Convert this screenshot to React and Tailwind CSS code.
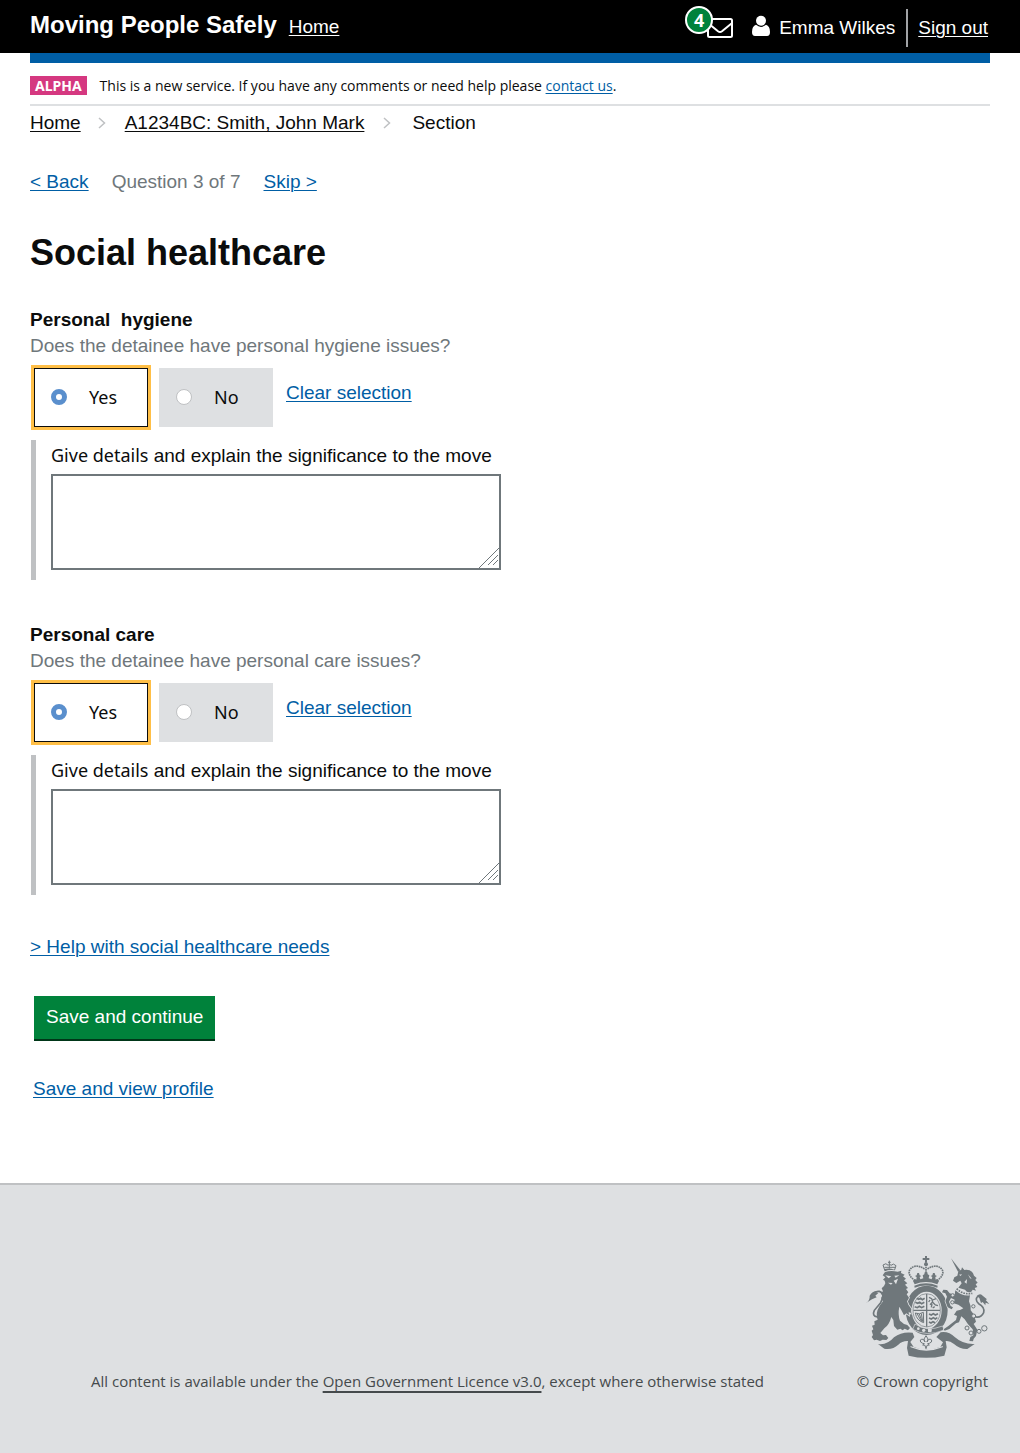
import React from "react";

const link = "text-[#005ea5] underline decoration-1 underline-offset-2";

function Chevron() {
  return (
    <svg width="8" height="12" viewBox="0 0 8 12" fill="none" stroke="#bfc1c3" strokeWidth="1.5" aria-hidden="true">
      <path d="M1 1l5.5 5L1 11" />
    </svg>
  );
}

function MessagesIcon() {
  return (
    <a href="#messages" aria-label="4 messages" className="relative block h-7 w-12 shrink-0">
      <svg className="absolute right-0 bottom-1" width="26" height="20" viewBox="0 0 26 20" fill="none" stroke="#fff" strokeWidth="2" strokeLinejoin="round" aria-hidden="true">
        <rect x="1" y="1" width="24" height="18" rx="1.5" />
        <path d="M1.5 5.5L11 13.2q2 1.4 4 0L24.5 5.5" />
      </svg>
      <span className="absolute -top-2 left-0 flex h-7 w-7 items-center justify-center rounded-full border-2 border-white bg-[#00823b] font-['Noto_Sans',sans-serif] text-[18px] leading-6 font-bold">4</span>
    </a>
  );
}

function Header() {
  return (
    <header className="bg-black text-white">
      <div className="flex min-h-[53px] items-center pr-8 pl-[30px]">
        <span className="pb-1 text-2xl font-bold">Moving People Safely</span>
        <a href="#home" className="ml-3 underline decoration-1 underline-offset-2">Home</a>
        <div className="ml-auto flex items-center pt-0.5">
          <MessagesIcon />
          <svg className="mr-2 mb-1 ml-[18px]" width="20" height="22" viewBox="0 0 20 22" fill="#fff" aria-hidden="true">
            <circle cx="10" cy="5.7" r="5" />
            <path d="M5 9.8Q10 14 15 9.8Q19 11 19 17Q19 21 16 21H4Q1 21 1 17Q1 11 5 9.8Z" />
          </svg>
          <span>Emma Wilkes</span>
          <span className="ml-[11px] h-[38px] w-0.5 bg-[#a1a3a6]" />
          <a href="#sign-out" className="ml-[10px] underline decoration-1 underline-offset-2">Sign out</a>
        </div>
      </div>
    </header>
  );
}

function RadioBlock({ name, label, selected }) {
  return (
    <label className={selected
      ? "flex h-[59px] w-[114px] items-center border border-[#0b0c0c] bg-white pb-px pl-4 outline-3 outline-[#ffbf47]"
      : "flex h-[59px] w-[114px] items-center border border-[#dee0e2] bg-[#dee0e2] pb-px pl-4"}>
      <input type="radio" name={name} defaultChecked={selected}
        className="h-4 w-4 appearance-none rounded-full border border-[#bfc1c3] bg-white checked:border-5 checked:border-[#5a8fcd]" />
      <span className="ml-[22px] font-['Noto_Sans',sans-serif] text-[18px]">{label}</span>
    </label>
  );
}

function Question({ id, title, hint }) {
  return (
    <fieldset>
      <legend className="leading-[26px]">
        <span className="block font-bold whitespace-pre">{title}</span>
        <span className="block text-[#6f777b]">{hint}</span>
      </legend>
      <div className="mt-[9px] ml-1 flex">
        <RadioBlock name={id} label="Yes" selected />
        <div className="ml-[11px]"><RadioBlock name={id} label="No" /></div>
        <a href="#clear" className={`${link} mt-[13px] ml-[13px] self-start`}>Clear selection</a>
      </div>
      <div className="mt-[13px] ml-px border-l-5 border-[#bfc1c3] pb-[10px] pl-[15px]">
        <label htmlFor={`${id}-details`} className="block pt-[3px] pb-[6px]">
          <span className="font-['Noto_Sans',sans-serif] text-[18px]">Give details</span> and explain the significance to the move
        </label>
        <div className="relative max-w-[450px]">
          <textarea id={`${id}-details`} className="block h-24 w-full resize-none border-2 border-[#6f777b] bg-white p-1" />
          <svg className="pointer-events-none absolute right-0.5 bottom-0.5" width="20" height="20" viewBox="0 0 20 20" stroke="#6f777b" aria-hidden="true">
            <path d="M0 20L20 0M9 17L19 7M14 17L19 12" />
          </svg>
        </div>
      </div>
    </fieldset>
  );
}

function Crest() {
  return (
    <svg className="-mr-0.5" width="125" height="104" viewBox="45 45 375 312" fill="#6f777b" aria-hidden="true">
      {/* crown */}
      <path d="M225 48h6v6h7v6h-7v8h-6v-8h-7v-6h7z" />
      <circle cx="228" cy="73" r="6" />
      <g fill="none" stroke="#6f777b" strokeWidth="5" strokeDasharray="5 2">
        <path d="M195 122Q172 105 179 90Q194 68 226 88" />
        <path d="M261 122Q284 105 277 90Q262 68 230 88" />
        <path d="M228 80V122" />
      </g>
      <path d="M189 123l6-6 4 2 1-8-5-3 5-2 2-7 5 0 2 7 5 2-5 3 2 7 9-3-2-9 5-3 1-6h8l1 6 5 3-2 9 9 3 2-7-5-3 5-2 2-7h5l2 7 5 2-5 3 1 8 4-2 6 6-5 10Q228 119 194 133z" />
      <path d="M193 137Q228 123 263 137l-1 6Q228 130 194 143z" />
      {/* garter and shield */}
      <ellipse cx="230" cy="211" rx="54" ry="65" fill="none" stroke="#6f777b" strokeWidth="18" />
      <ellipse cx="230" cy="211" rx="41" ry="50" fill="#dee0e2" stroke="#6f777b" strokeWidth="2" />
      <path d="M228 162h4v98h-4zM190 209h80v4h-80z" />
      <path fill="none" stroke="#6f777b" strokeWidth="5" d="M200 175l6 3 6-3 5 4 7-4M196 187l7 3 6-3 6 4 8-4M194 200l8 3 6-4 7 4 8-4M237 222l7 3 6-4 6 4 8-4M237 234l7 3 6-4 6 4 6-4M237 246l6 3 6-4 6 3" />
      <path fill="none" stroke="#6f777b" strokeWidth="4" d="M237 172l8 4 3 10-8 8M248 180l10-4M248 187l8 8 8 2M246 192l-2 10M254 200l-6 4M240 180l-4 6" />
      <path fill="none" stroke="#6f777b" strokeWidth="3" d="M196 219Q208 225 220 217L221 248Q200 242 196 219M202 222l12 22M208 222l8 22M214 221l4 24" />
      <path d="M195 252Q230 277 278 258L282 270Q230 292 188 268z" stroke="#dee0e2" strokeWidth="2" />
      <g fill="#dee0e2"><circle cx="205" cy="266" r="4" /><circle cx="221" cy="271" r="5" /><path d="M234 266l12 2-2 9-10-1z" /></g>
      {/* lion */}
      <path fill="none" stroke="#6f777b" strokeWidth="3" d="M104 90L99 75Q108 67 115 76Q118 68 123 76Q130 68 138 77L133 92M118 62v24M114 67h8M103 82h32" />
      <path d="M103 87Q118 83 135 90L134 96Q118 90 103 94z" />
      <path stroke="#dee0e2" strokeWidth="5" paintOrder="stroke" d="M105 96Q122 90 143 95L154 92 153 99 164 104 159 109 168 116 162 121 172 130 165 134 174 144 168 147 175 157 170 163 177 173 174 179 171 184 175 194 184 207 182 220 176 215 177 226 169 220 162 226 155 212 148 200Q143 224 150 242L162 252 172 255 180 264 174 271 164 266 158 271 151 266 142 269 132 258 130 240 124 231Q117 256 103 265L91 279 99 286 108 285 115 294 109 300 98 299 90 303 80 299 72 301 65 291 69 285 65 272 70 268 66 257 74 254 73 244 83 239Q75 220 89 197L99 184 93 174 98 168 92 159 99 154 95 145 102 138 106 130 104 122 99 119 106 112 98 106z" />
      <path fill="#dee0e2" d="M106 106l18 3-8 6zM133 107l15-1-11 7zM131 122l13-6-6 17zM114 128l14 1-5 5z" />
      <path fill="none" stroke="#6f777b" strokeWidth="5" d="M82 231Q65 228 73 211L92 188Q107 160 88 154Q76 153 70 164" />
      <path d="M48 189Q60 182 59 167Q67 151 85 153L77 158 85 159 76 167 80 172 66 178z" />
      {/* unicorn */}
      <path d="M303 55L331 91 324 95z" />
      <path d="M325 94L334 89 336 82 343 90Q367 87 372 107L380 114 376 120 383 128 377 133 382 141 374 144 378 152 368 149 364 155Q352 160 345 149L325 143 335 130 331 122 319 129 309 122 313 112 322 107z" />
      <path fill="#dee0e2" d="M327 104l9-1-4 5zM343 126l8-9-1 14zM354 103l11 13-5-1z" />
      <path fill="none" stroke="#6f777b" strokeWidth="5" strokeDasharray="5 3" d="M320 146Q340 166 367 160" />
      <path stroke="#dee0e2" strokeWidth="4" paintOrder="stroke" d="M316 151Q338 170 360 166L357 184Q364 199 362 211L371 223 378 245 371 252 382 269 378 288 371 296 369 304 358 303 361 291 370 286 368 268 354 253 344 238 334 229 327 247 318 250 298 267 284 272 281 268 295 258 318 240 321 228 312 224 320 212Q334 211 340 205L325 194 311 190 314 179 303 174 297 185 302 198 309 202 305 208 293 202 286 183 291 170 286 160 276 157 280 149 291 150 299 160 314 164z" />
      <path fill="none" stroke="#6f777b" strokeWidth="5" d="M370 229Q392 237 401 218Q406 202 386 191Q373 179 384 168" />
      <path d="M380 168Q391 158 399 168L411 178 407 180 418 192 407 188 406 196 398 186 393 189 388 174z" />
      <g fill="#dee0e2" stroke="#6f777b" strokeWidth="3">
        <circle cx="308" cy="166" r="5" /><circle cx="307" cy="187" r="5" /><circle cx="370" cy="199" r="5" /><circle cx="371" cy="228" r="6" />
        <circle cx="351" cy="264" r="6" /><circle cx="363" cy="279" r="6" /><circle cx="387" cy="274" r="6" /><circle cx="403" cy="265" r="8" />
      </g>
      {/* scroll */}
      <path d="M84 312Q112 316 132 292Q155 274 188 278L193 291 181 306 191 321Q228 336 271 321L279 307 259 291 272 277Q296 273 315 292Q340 314 374 312L352 327Q330 328 312 312Q299 301 287 303L290 322 283 347Q228 360 176 347L171 324 174 303Q157 302 145 314Q128 330 103 326z" />
      <path fill="#dee0e2" d="M181 318Q228 338 279 318L278 322Q228 342 182 322z" />
      <path fill="none" stroke="#6f777b" strokeWidth="3" d="M228 287l6 10-3 9q5-13 14-6q2 7-7 10l-5 1 5 4-7 1-3 10-3-10-7-1 5-4-5-1q-9-3-7-10q9-7 14 6l-3-9z" />
    </svg>
  );
}

function Footer() {
  return (
    <footer className="mt-[82px] border-t-2 border-[#bfc1c3] bg-[#dee0e2] pt-[70px] pb-[60px] font-['Open_Sans',sans-serif] text-[15px] text-[#454a4c]">
      <div className="flex items-end pr-8 pl-[91px]">
        <p>All content is available under the <a href="#licence" className="underline decoration-2 underline-offset-4">Open Government Licence v3.0</a>, except where otherwise stated</p>
        <div className="ml-auto flex flex-col items-end">
          <Crest />
          <a href="#copyright" className="mt-[10px]">© Crown copyright</a>
        </div>
      </div>
    </footer>
  );
}

export default function App() {
  return (
    <div className="bg-white font-['Liberation_Sans',Arial,sans-serif] text-[19px] leading-6 text-[#0b0c0c]">
      <Header />
      <div className="mx-[30px]">
        <div className="h-[10px] bg-[#005ea5]" />
        <div className="flex items-center border-b-2 border-[#dee0e2] pt-3 pb-2 font-['Open_Sans',sans-serif] text-[14px] leading-[21px]">
          <strong className="bg-[#d53880] px-[5px] font-['Noto_Sans',sans-serif] leading-[19px] text-white">ALPHA</strong>
          <span className="ml-[13px]">This is a new service. If you have any comments or need help please <a href="#contact" className={link}>contact us</a>.</span>
        </div>
        <nav aria-label="Breadcrumb" className="mt-[5px] flex items-center">
          <a href="#home" className="underline decoration-1 underline-offset-2">Home</a>
          <span className="ml-[17px]"><Chevron /></span>
          <a href="#person" className="ml-[19px] underline decoration-1 underline-offset-2">A1234BC: Smith, John Mark</a>
          <span className="ml-[19px]"><Chevron /></span>
          <span className="ml-[21px]">Section</span>
        </nav>
        <main>
          <div className="mt-[35px] flex gap-[23px]">
            <a href="#back" className={link}>&lt; Back</a>
            <span className="text-[#6f777b]">Question 3 of 7</span>
            <a href="#skip" className={link}>Skip &gt;</a>
          </div>
          <h1 className="mt-[39px] text-4xl leading-10 font-bold">Social healthcare</h1>
          <form className="mt-[34px]">
            <div className="flex flex-col gap-[42px]">
              <Question id="hygiene" title="Personal  hygiene" hint="Does the detainee have personal hygiene issues?" />
              <Question id="care" title="Personal care" hint="Does the detainee have personal care issues?" />
            </div>
            <a href="#help" className={`${link} mt-10 inline-block`}>&gt; Help with social healthcare needs</a>
            <button type="button" className="mt-[37px] ml-1 block border-b-2 border-[#003618] bg-[#00823b] px-3 pt-[9px] pb-[10px] text-white">Save and continue</button>
            <a href="#profile" className={`${link} mt-9 ml-[3px] inline-block`}>Save and view profile</a>
          </form>
        </main>
      </div>
      <Footer />
    </div>
  );
}
